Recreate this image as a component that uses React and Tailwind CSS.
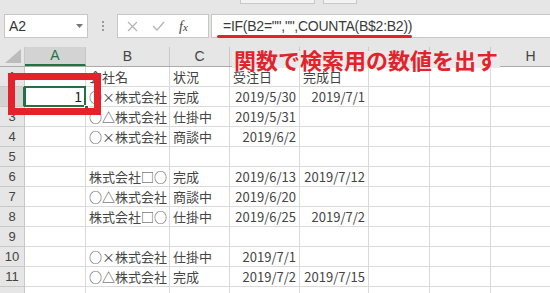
import React from "react";

// D-G header letters sit under the red note in the picture, so they are left blank
const cols = [
  { key: "A", w: "w-[61px]", label: "A" },
  { key: "B", w: "w-[84px]", label: "B" },
  { key: "C", w: "w-[60px]", label: "C" },
  { key: "D", w: "w-[70px]", label: "" },
  { key: "E", w: "w-[69px]", label: "" },
  { key: "F", w: "w-[61px]", label: "" },
  { key: "G", w: "w-[61px]", label: "" },
  { key: "H", w: "w-[80px]", label: "H" },
];

const rows = [
  { n: 1, a: "", b: "会社名", c: "状況", d: "受注日", e: "完成日", head: true },
  { n: 2, a: "1", b: "○×株式会社", c: "完成", d: "2019/5/30", e: "2019/7/1" },
  { n: 3, a: "", b: "○△株式会社", c: "仕掛中", d: "2019/5/31", e: "" },
  { n: 4, a: "", b: "○×株式会社", c: "商談中", d: "2019/6/2", e: "" },
  { n: 5, a: "", b: "", c: "", d: "", e: "" },
  { n: 6, a: "", b: "株式会社□○", c: "完成", d: "2019/6/13", e: "2019/7/12" },
  { n: 7, a: "", b: "○△株式会社", c: "商談中", d: "2019/6/20", e: "" },
  { n: 8, a: "", b: "株式会社□○", c: "仕掛中", d: "2019/6/25", e: "2019/7/2" },
  { n: 9, a: "", b: "", c: "", d: "", e: "" },
  { n: 10, a: "", b: "○×株式会社", c: "仕掛中", d: "2019/7/1", e: "" },
  { n: 11, a: "", b: "○△株式会社", c: "完成", d: "2019/7/2", e: "2019/7/15" },
  { n: "", a: "", b: "", c: "", d: "", e: "" },
];

const jp = { fontFamily: '"Noto Sans CJK JP", "Noto Sans", sans-serif' };
const sans = { fontFamily: '"Liberation Sans", sans-serif' };

function Cell({ w, children, right, extra = "" }) {
  return (
    <div
      className={`${w} h-[20px] shrink-0 border-r border-b border-[#dadada] px-[3px] flex items-center text-[13px] text-[#444] whitespace-nowrap ${right ? "justify-end" : "justify-start"} ${extra}`}
    >
      {children}
    </div>
  );
}

export default function App() {
  return (
    <div className="relative w-[550px] h-[293px] overflow-hidden bg-[#e6e6e6]" style={jp}>
      {/* ribbon bottom edge */}
      <div className="h-[14px] flex gap-[8px] pl-[240px]">
        <div className="w-[75px] h-[4px] bg-[#f3f3f3] border border-t-0 border-[#c8c8c8]" />
        <div className="w-[34px] h-[4px] bg-[#f3f3f3] border border-t-0 border-[#c8c8c8]" />
      </div>

      {/* formula bar */}
      <div className="h-[24px] flex items-stretch">
        <div className="ml-[4px] w-[84px] bg-white border border-[#c6c6c6] flex items-center justify-between pl-[4px] pr-[4px]">
          <span className="text-[14px] text-[#333]" style={sans}>A2</span>
          <svg width="7" height="4" viewBox="0 0 7 4"><path d="M0 0 L7 0 L3.5 4 Z" fill="#777" /></svg>
        </div>
        <div className="w-[29px] flex flex-col items-center justify-center gap-[2px]">
          <span className="w-[2px] h-[2px] bg-[#9a9a9a]" />
          <span className="w-[2px] h-[2px] bg-[#9a9a9a]" />
          <span className="w-[2px] h-[2px] bg-[#9a9a9a]" />
        </div>
        <div className="w-[92px] bg-white border border-[#c6c6c6] flex items-center pl-[9px] gap-[14px]">
          <svg width="11" height="11" viewBox="0 0 11 11"><path d="M1 1 L10 10 M10 1 L1 10" stroke="#b4b4b4" strokeWidth="1.2" /></svg>
          <svg width="13" height="10" viewBox="0 0 13 10"><path d="M1 5 L5 9 L12 1" stroke="#b4b4b4" strokeWidth="1.3" fill="none" /></svg>
          <span className="text-[14px] italic text-[#444]" style={{ fontFamily: '"Liberation Serif", serif' }}>f<span className="text-[11px]">x</span></span>
        </div>
        <div className="ml-[2px] flex-1 bg-white border border-r-0 border-[#c6c6c6] flex items-center pl-[11px]">
          <span className="text-[14px] text-[#3a3a3a] tracking-[-0.25px]" style={sans}>
            =IF(B2="","",COUNTA(B$2:B2))
          </span>
        </div>
      </div>

      <div className="h-[9px]" />

      {/* sheet */}
      <div className="bg-white">
        <div className="flex h-[20px] bg-[#e6e6e6] border-b border-[#ababab]">
          <div className="w-[25px] shrink-0 border-r border-[#c8c8c8] flex items-end justify-end p-[3px]">
            <svg width="16" height="14" viewBox="0 0 16 14"><path d="M16 0 L16 14 L0 14 Z" fill="#bcbcbc" /></svg>
          </div>
          {cols.map((c) => (
            <div
              key={c.key}
              className={`${c.w} shrink-0 border-r border-[#c8c8c8] flex items-center justify-center text-[14px] ${c.key === "A" ? "bg-[#d3d3d3] text-[#217346] border-b-2 border-b-[#217346]" : "text-[#444]"}`}
              style={sans}
            >
              {c.label}
            </div>
          ))}
        </div>

        {rows.map((r, i) => (
          <div key={i} className="flex">
            <div
              className={`w-[25px] h-[20px] shrink-0 border-b border-r flex items-center justify-center text-[13px] ${r.n === 2 ? "bg-[#d3d3d3] border-r-2 border-r-[#217346] border-b-[#c8c8c8] text-[#217346]" : "bg-[#e6e6e6] border-[#c8c8c8] text-[#444]"}`}
              style={sans}
            >
              {r.n}
            </div>
            <Cell w="w-[61px]" right extra={r.n === 2 ? "relative" : ""}>
              {r.a && <span className="text-[14px] text-[#222]">{r.a}</span>}
              {r.n === 2 && (
                <>
                  <span className="absolute left-[-1px] top-[-1px] right-[-1px] bottom-[-1px] border-2 border-[#217346]" />
                  <span className="absolute right-[-4px] bottom-[-4px] w-[5px] h-[5px] bg-[#217346] border border-white" />
                </>
              )}
            </Cell>
            <Cell w="w-[84px]">{r.b}</Cell>
            <Cell w="w-[60px]">{r.c}</Cell>
            <Cell w="w-[70px]" right={!r.head}>{r.d}</Cell>
            <Cell w="w-[69px]" right={!r.head}>{r.e}</Cell>
            <Cell w="w-[61px]" />
            <Cell w="w-[61px]" />
            <Cell w="w-[80px]" />
          </div>
        ))}
      </div>

      {/* annotations */}
      <div className="absolute left-[217px] top-[35px] w-[195px] h-[3px] rounded-full bg-[#e3232b]" />
      <div
        className="absolute left-[232px] top-[51px] h-[17px] pl-[2px] pr-[2px] bg-[#e9e9e9] text-[22px] font-bold leading-[17px] text-[#e3232b] whitespace-nowrap"
        style={jp}
      >
        関数で検索用の数値を出す
      </div>
      <div className="absolute left-[8px] top-[73px] w-[93px] h-[42px] border-[7px] border-[#e3232b]" />
    </div>
  );
}
